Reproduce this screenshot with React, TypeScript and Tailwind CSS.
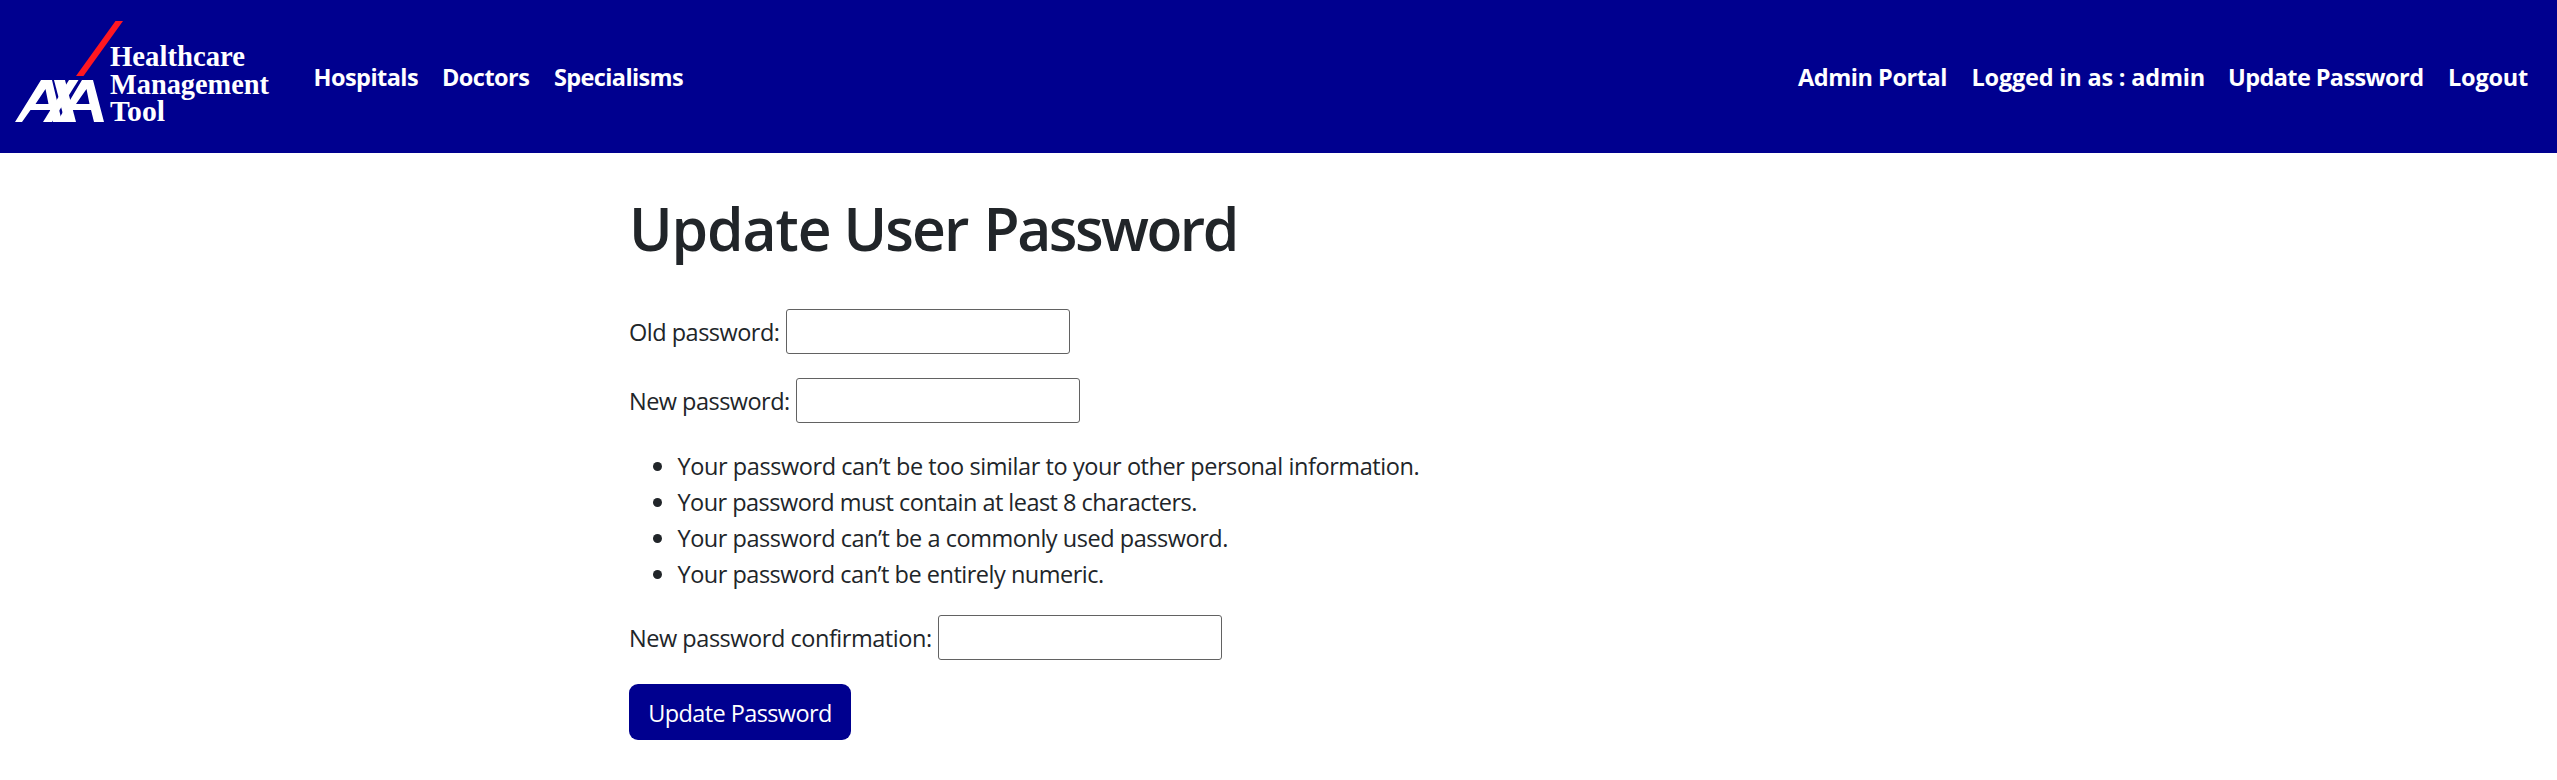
const leftLinks = [
  { label: "Hospitals", cls: "w-[104.5px] tracking-[-0.55px]" },
  { label: "Doctors", cls: "w-[88px] tracking-[-0.55px]" },
  { label: "Specialisms", cls: "w-[130px] tracking-[-0.62px]" },
];
const rightLinks = [
  { label: "Admin Portal", cls: "w-[149.5px] tracking-[-0.46px]" },
  { label: "Logged in as : admin", cls: "w-[232.5px] tracking-[-0.2px]" },
  { label: "Update Password", cls: "w-[196px] tracking-[-0.6px]" },
  { label: "Logout", cls: "w-[81px] tracking-[-0.2px]" },
];
const hints = [
  { text: "Your password can’t be too similar to your other personal information.", cls: "tracking-[-0.42px]" },
  { text: "Your password must contain at least 8 characters.", cls: "tracking-[-0.53px]" },
  { text: "Your password can’t be a commonly used password.", cls: "tracking-[-0.46px]" },
  { text: "Your password can’t be entirely numeric.", cls: "tracking-[-0.49px]" },
];

function Logo() {
  return (
    <svg width="290" height="153" viewBox="0 0 290 153" className="block shrink-0 overflow-visible">
      <path d="M115.500 21H123L83.500 76H76Z" fill="#ff1721" />
      <g fill="#fff">
        <path fillRule="evenodd" d="M15 122L41 80H52L62 122H53L50 110H30.500L22 122ZM35.500 104H48.500L45.500 89Z" />
        <path d="M54 80H65L76 122H65Z" />
        <path d="M43 122L69 80H78.500L52 122Z" />
        <path fillRule="evenodd" d="M57 122L82 80H93L104 122H94L91 110H72L65 122ZM76 104H89.500L86.500 89Z" />
      </g>
      <g fill="#fff" fontFamily="'Liberation Serif', serif" fontWeight="700" fontSize="29.5">
        <text x="110" y="66.300" textLength="135" lengthAdjust="spacingAndGlyphs">Healthcare</text>
        <text x="110" y="93.500" textLength="159" lengthAdjust="spacingAndGlyphs">Management</text>
        <text x="110" y="121" textLength="55" lengthAdjust="spacingAndGlyphs">Tool</text>
      </g>
    </svg>
  );
}

function Field({ label, id, cls }: { label: string; id: string; cls: string }) {
  return (
    <div className="flex h-[45px] items-center">
      <label htmlFor={id} className={`mr-[6px] shrink-0 whitespace-nowrap ${cls}`}>{label}</label>
      <input id={id} type="password" className="h-[45px] w-[284px] rounded-[3px] border border-[#626262] bg-white px-1 outline-none" />
    </div>
  );
}

export default function App() {
  return (
    <div className="min-h-[780px] w-full bg-white font-['Open_Sans',sans-serif] text-[23.5px] leading-9 text-[#212529]">
      <nav className="flex h-[153px] items-center whitespace-nowrap bg-[#00008f] pr-[28px] font-bold text-white">
        <Logo />
        <div className="ml-[23.5px] flex gap-6">
          {leftLinks.map((l) => <a key={l.label} href="#" className={l.cls}>{l.label}</a>)}
        </div>
        <div className="ml-auto flex gap-6">
          {rightLinks.map((l) => <a key={l.label} href="#" className={l.cls}>{l.label}</a>)}
        </div>
      </nav>
      <main className="pl-[629px]">
        <h1 className="flex whitespace-pre pt-[39px] text-[58.8px] font-semibold leading-[72px]">
          <span className="w-[214.5px] tracking-[-1.1px]">Update </span>
          <span className="w-[140px] tracking-[-1.9px]">User </span>
          <span className="tracking-[-2.5px]">Password</span>
        </h1>
        <form className="mt-[45px]">
          <Field id="old" label="Old password:" cls="w-[151px] tracking-[-0.5px]" />
          <div className="mt-6"><Field id="new" label="New password:" cls="w-[161px] tracking-[-0.53px]" /></div>
          <ul className="mt-6 pl-[48.5px]">
            {hints.map((h) => (
              <li key={h.text} className="relative h-9 pt-px">
                <span className="absolute -left-[25px] top-[15px] h-[9px] w-[9px] rounded-full bg-[#212529]" />
                <span className={h.cls}>{h.text}</span>
              </li>
            ))}
          </ul>
          <div className="mt-6"><Field id="confirm" label="New password confirmation:" cls="w-[303px] tracking-[-0.46px]" /></div>
          <button type="button" className="mt-6 h-14 w-[222px] rounded-[9px] bg-[#00008f] pt-[2px] tracking-[-0.6px] text-white">
            Update Password
          </button>
        </form>
      </main>
    </div>
  );
}
